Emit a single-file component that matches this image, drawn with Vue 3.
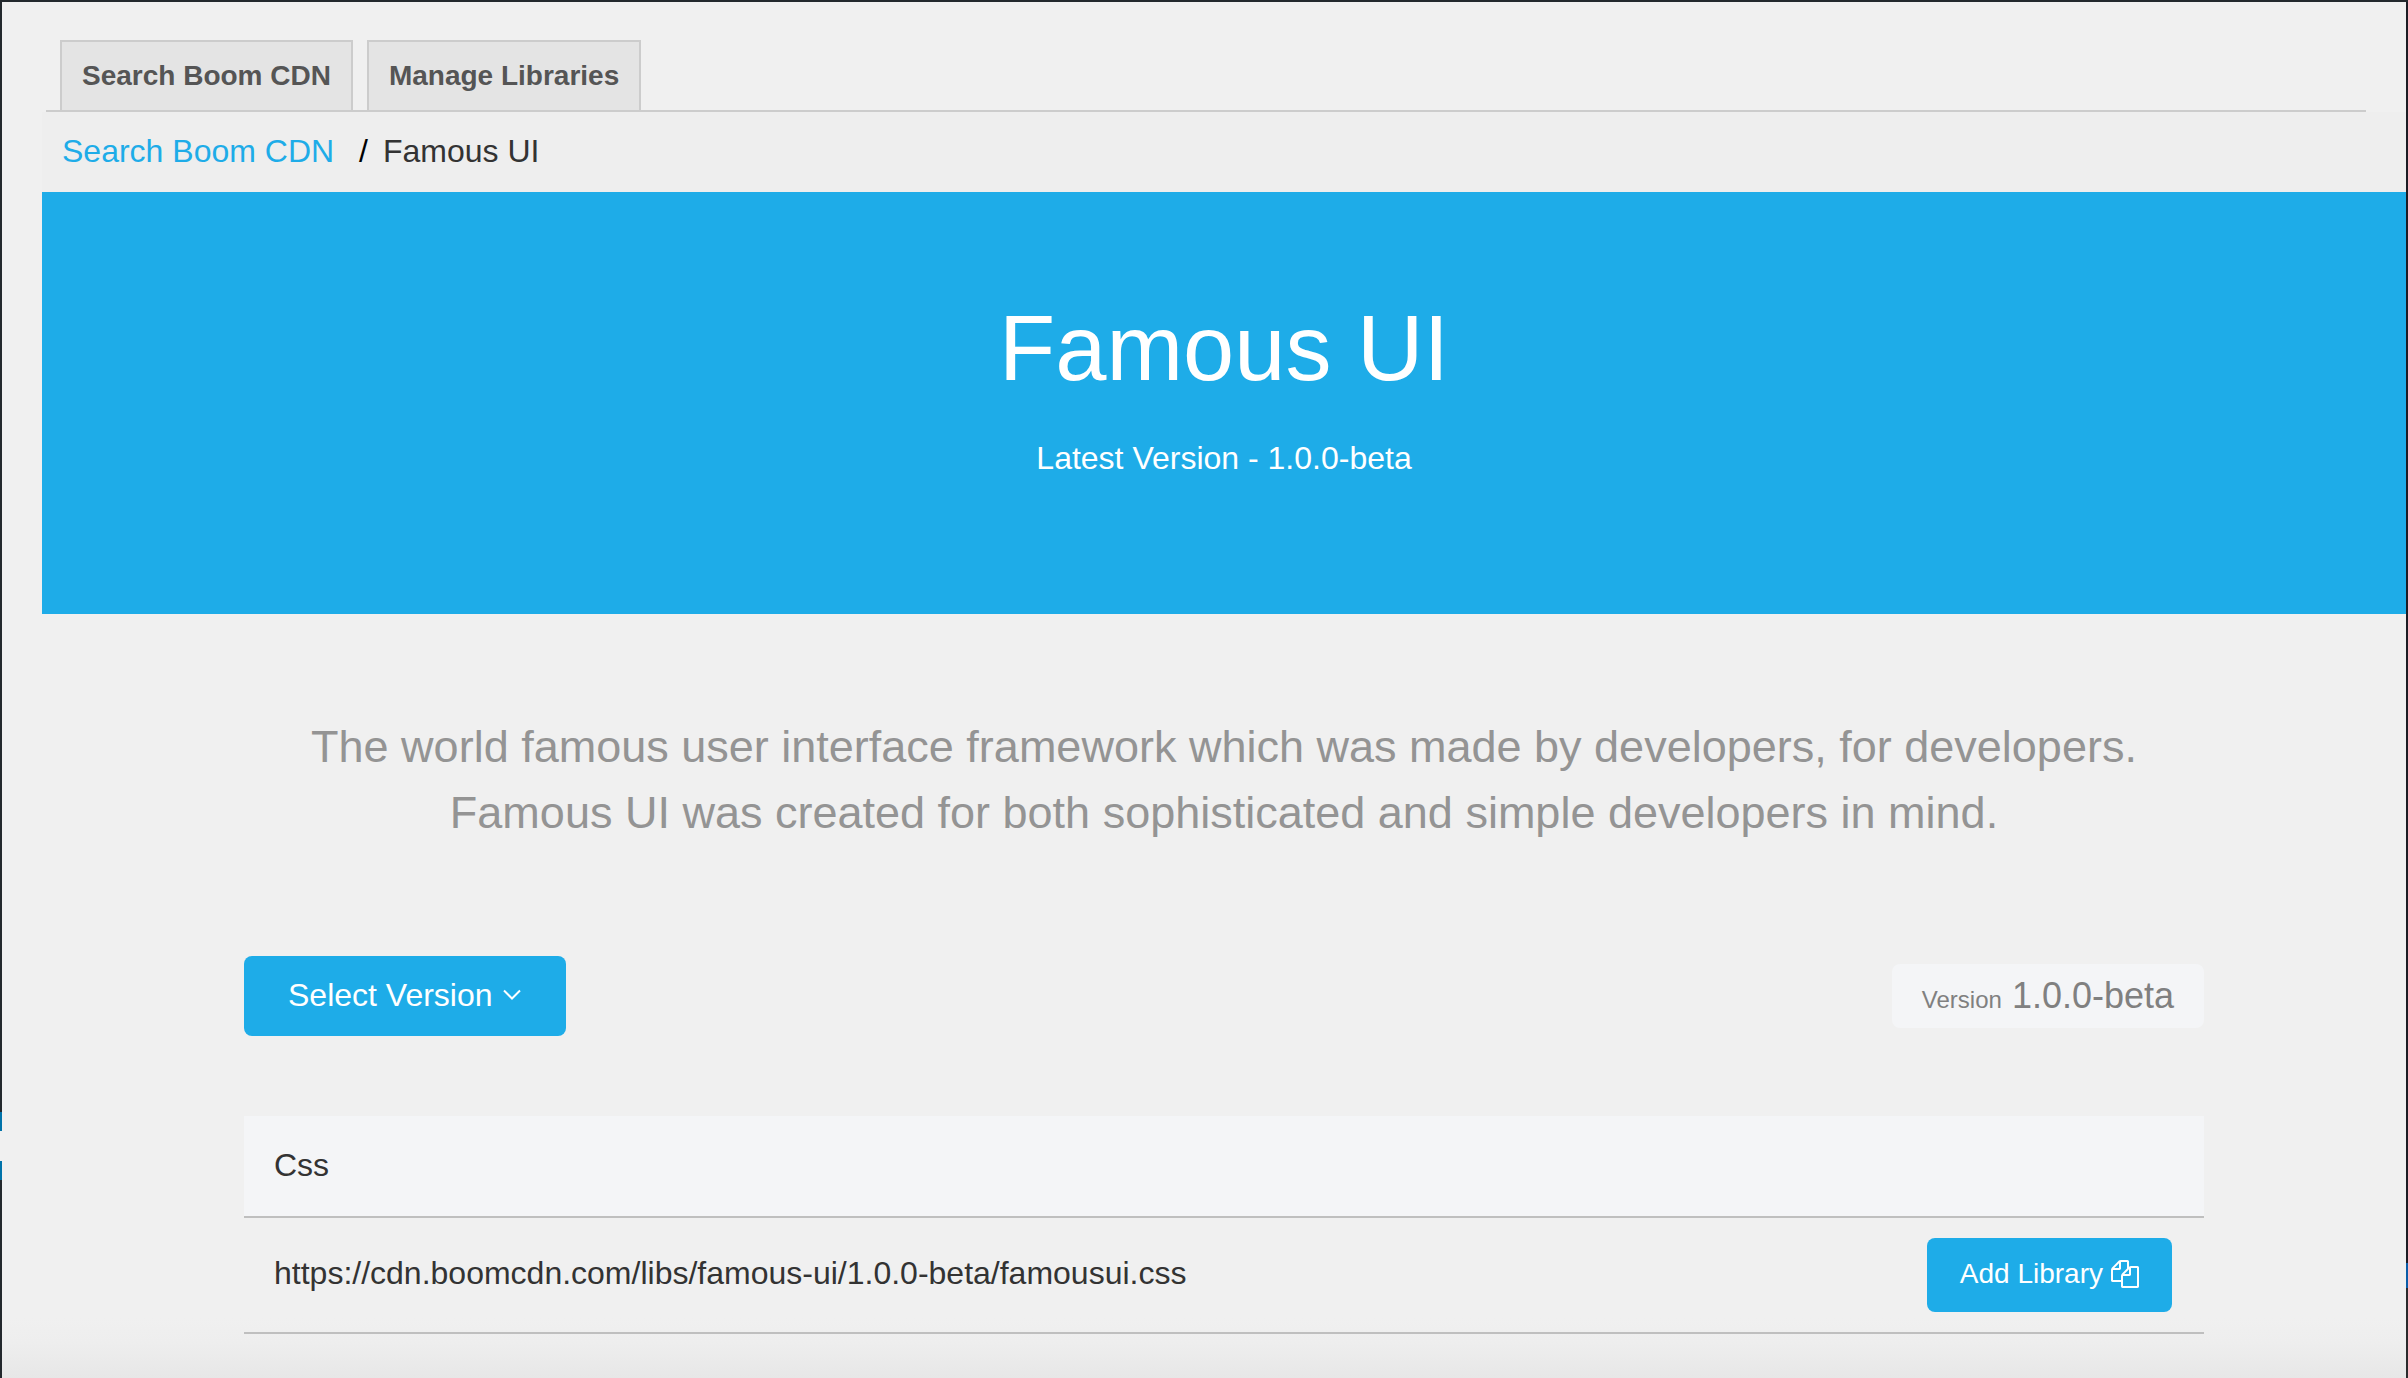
<script setup>
const tabs = ['Search Boom CDN', 'Manage Libraries']
const library = {
  name: 'Famous UI',
  version: '1.0.0-beta',
  files: ['https://cdn.boomcdn.com/libs/famous-ui/1.0.0-beta/famousui.css'],
}
</script>

<template>
  <div class="shell">
    <div class="edge edge-left"></div>
    <main class="page">
      <nav class="tabs">
        <a v-for="tab in tabs" :key="tab" class="tab" href="#">{{ tab }}</a>
      </nav>

      <nav class="breadcrumb" aria-label="Breadcrumb">
        <a class="crumb-link" href="#">Search Boom CDN</a>
        <span class="separator">/</span>
        <span>{{ library.name }}</span>
      </nav>

      <header class="hero">
        <h1>{{ library.name }}</h1>
        <p>Latest Version - {{ library.version }}</p>
      </header>

      <section class="content">
        <p class="description">
          The world famous user interface framework which was made by developers, for developers.<br />
          Famous UI was created for both sophisticated and simple developers in mind.
        </p>

        <div class="toolbar">
          <button class="button select-version" type="button">
            Select Version
            <svg class="chevron" viewBox="0 0 18 12" aria-hidden="true">
              <path d="M1 1.500L9 9.500L17 1.500" fill="none" stroke="currentColor" stroke-width="2" />
            </svg>
          </button>
          <div class="version"><small>Version</small>{{ library.version }}</div>
        </div>

        <table class="files">
          <thead>
            <tr>
              <th colspan="2">Css</th>
            </tr>
          </thead>
          <tbody>
            <tr v-for="file in library.files" :key="file">
              <td>{{ file }}</td>
              <td class="action">
                <button class="button add-library" type="button">
                  Add Library
                  <svg class="copy" viewBox="0 0 1792 1792" aria-hidden="true">
                    <path fill="currentColor" d="M1696 384q40 0 68 28t28 68v1216q0 40-28 68t-68 28h-960q-40 0-68-28t-28-68v-288h-544q-40 0-68-28t-28-68v-672q0-40 20-88t48-76l408-408q28-28 76-48t88-20h416q40 0 68 28t28 68v328q68-40 128-40h416zm-544 213l-299 299h299v-299zm-640-384l-299 299h299v-299zm196 647l316-316v-416h-384v416q0 40-28 68t-68 28h-416v640h512v-256q0-40 20-88t48-76zm956 804v-1152h-384v416q0 40-28 68t-68 28h-416v640h896z" />
                  </svg>
                </button>
              </td>
            </tr>
          </tbody>
        </table>
      </section>
    </main>
    <div class="edge edge-right"></div>
  </div>
</template>

<style>
body {
  margin: 0;
  background: #f0f0f0;
}
</style>

<style scoped>
.shell {
  display: flex;
  box-sizing: border-box;
  min-height: 100vh;
  border-top: 2px solid #23282d;
  background: linear-gradient(to top, #e7e7e7, #eeeeee 36px, #f0f0f0 60px);
  color: #333;
  font-family: "Liberation Sans", Arial, sans-serif;
  font-size: 32px;
  line-height: 48px;
}

.edge {
  flex: 0 0 2px;
}

.edge-left {
  background: linear-gradient(
    #23282d 1110px,
    #0073aa 1110px 1129px,
    #f0f0f0 1129px 1159px,
    #0073aa 1159px 1178px,
    #23282d 1178px
  );
}

.edge-right {
  background: linear-gradient(#1c1c24 1261px, #0a5ca8 1261px 1286px, #2a2a2c 1286px);
}

.page {
  flex: 1;
  min-width: 0;
  padding: 38px 0 40px 40px;
}

.tabs {
  display: flex;
  gap: 14px;
  margin: 0 40px 0 4px;
  padding-left: 14px;
  border-bottom: 2px solid #ccc;
}

.tab {
  padding: 10px 20px;
  border: 2px solid #ccc;
  border-bottom: 0;
  background: #e4e4e4;
  color: #555;
  font-size: 28px;
  font-weight: 700;
  text-decoration: none;
}

.breadcrumb {
  display: flex;
  padding: 15px 20px 17px;
  background: #eee;
}

.crumb-link {
  color: #1eace8;
  text-decoration: none;
}

.separator {
  margin: 0 15px 0 25px;
  color: #000;
}

.hero {
  padding: 100px 0 132px;
  background: #1eace8;
  color: #fff;
  text-align: center;
}

.hero h1 {
  margin: 0 0 30px;
  font-size: 92px;
  font-weight: 400;
  line-height: 112px;
}

.hero p {
  margin: 0;
}

.content {
  max-width: 1960px;
  margin: 0 auto;
  padding-top: 100px;
}

.description {
  margin: 0 0 110px;
  color: #949494;
  font-size: 45px;
  line-height: 66px;
  text-align: center;
}

.toolbar {
  display: flex;
  align-items: center;
  justify-content: space-between;
  margin-bottom: 80px;
}

.button {
  display: inline-flex;
  align-items: center;
  border: 0;
  border-radius: 8px;
  background: #1eace8;
  color: #fff;
  font-family: inherit;
  line-height: 48px;
  cursor: pointer;
}

.select-version {
  gap: 10px;
  padding: 15px 45px 17px 44px;
  font-size: 32px;
}

.chevron {
  width: 18px;
  height: 12px;
}

.version {
  display: flex;
  gap: 10px;
  align-items: baseline;
  padding: 8px 30px;
  border-radius: 8px;
  background: #f4f5f7;
  color: #808080;
  font-size: 36px;
}

.version small {
  font-size: 24px;
  line-height: 32px;
}

.files {
  width: 100%;
  border-spacing: 0;
}

.files th,
.files td {
  padding: 18px 30px 22px;
  border-bottom: 2px solid #bfbfbf;
  font-weight: 400;
  text-align: left;
}

.files th {
  padding: 25px 30px 27px;
  background: #f4f5f7;
}

.files .action {
  padding: 20px 32px 20px 30px;
  text-align: right;
}

.add-library {
  gap: 8px;
  padding: 12px 33px 14px;
  font-size: 28px;
  vertical-align: top;
}

.copy {
  width: 28px;
  height: 28px;
}
</style>
